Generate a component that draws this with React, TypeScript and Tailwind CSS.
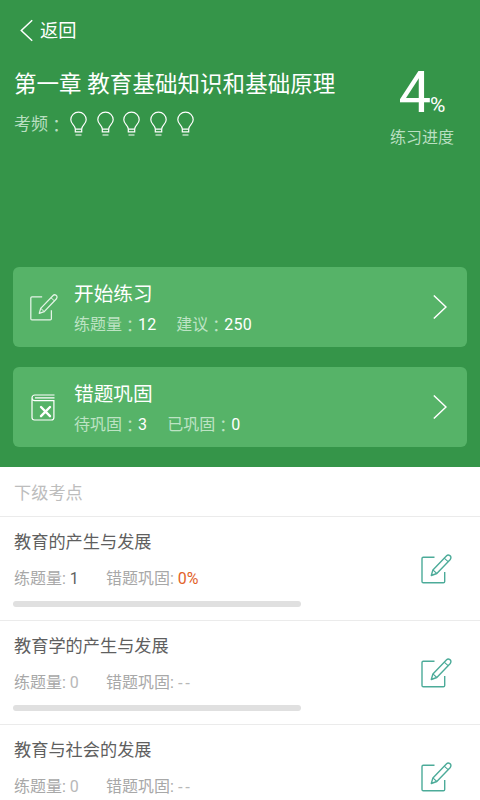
import type { ReactNode } from 'react';

type Topic = {
  title: string;
  count: string;
  accuracy: string;
  started: boolean;
};

const topics: Topic[] = [
  { title: '教育的产生与发展', count: '1', accuracy: '0%', started: true },
  { title: '教育学的产生与发展', count: '0', accuracy: '--', started: false },
  { title: '教育与社会的发展', count: '0', accuracy: '--', started: false },
];

export default function App() {
  return (
    <div className="h-[800px] w-[480px] overflow-hidden bg-white font-[Roboto,'Noto_Sans_CJK_SC',sans-serif]">
      <header className="h-[467px] bg-[#359549] px-[13px] text-white">
        <div className="flex h-[60px] items-center pl-[7px]">
          <svg className="h-[23px] w-[13px]" viewBox="0 0 13 23" fill="none" stroke="currentColor" strokeWidth="1.5">
            <path d="M12.2 1.2 1.3 11.5l10.9 10.3" />
          </svg>
          <span className="ml-[7px] pt-0.5 text-[18.2px] leading-6">返回</span>
        </div>

        <div className="flex h-[207px] justify-between">
          <div className="pt-2">
            <h1 className="whitespace-nowrap pl-px text-[22.5px] leading-8 tracking-[0.05px]">第一章 教育基础知识和基础原理</h1>
            <div className="mt-[9px] flex items-center">
              <span className="w-[57px] whitespace-nowrap pl-px text-[17px] leading-7 text-[#b9dfc1]">
                考频<Colon />
              </span>
              <div className="flex gap-[9.7px]">
                {[0, 1, 2, 3, 4].map((index) => (
                  <BulbIcon key={index} />
                ))}
              </div>
            </div>
          </div>
          <div className="flex w-[90px] flex-col items-center pt-0.5">
            <div className="flex h-[64px] items-baseline leading-[60px]">
              <span className="text-[58px] tracking-[-1px]">4</span>
              <span className="text-[21px]">%</span>
            </div>
            <span className="text-[16px] leading-6 text-[#b9dfc1]">练习进度</span>
          </div>
        </div>

        <div className="space-y-5">
          <ActionCard
            icon={<EditIcon className="ml-4 h-[29px] w-[29px] text-[#e3f4e6]" />}
            title="开始练习"
            stats={[['练题量', '12'], ['建议', '250']]}
          />
          <ActionCard
            icon={<BookIcon />}
            title="错题巩固"
            stats={[['待巩固', '3'], ['已巩固', '0']]}
          />
        </div>
      </header>

      <h2 className="h-[50px] border-b border-[#ebebeb] pl-3.5 text-[17.2px] leading-[52px] text-[#bdbdbd]">下级考点</h2>
      {topics.map((topic) => (
        <TopicRow key={topic.title} topic={topic} />
      ))}
    </div>
  );
}

function Colon() {
  return <span className="relative top-0.5 font-['Noto_Sans_CJK_TC']" lang="zh-TW">：</span>;
}

function ActionCard({ icon, title, stats }: { icon: ReactNode; title: string; stats: [string, string][] }) {
  return (
    <div className="flex h-20 items-center rounded-md bg-[#56b368] pr-5">
      <div className="w-[61px]">{icon}</div>
      <div className="flex-1 pt-[3px]">
        <p className="text-[19.7px] leading-7">{title}</p>
        <div className="mt-0.5 flex gap-[20px] text-[16px] leading-6">
          {stats.map(([label, value]) => (
            <span key={label} className="text-[#bde3c4]">
              {label}
              <Colon />
              <span className="tracking-[0.15px] text-white">{value}</span>
            </span>
          ))}
        </div>
      </div>
      <svg className="h-6 w-3.5" viewBox="0 0 14 24" fill="none" stroke="currentColor" strokeWidth="1.5">
        <path d="M.8.5 13 12 .8 23.5" />
      </svg>
    </div>
  );
}

function TopicRow({ topic }: { topic: Topic }) {
  return (
    <div className="flex h-[104px] justify-between border-b border-[#ebebeb] pl-[13px] pr-7">
      <div className="pt-[13px]">
        <p className="pl-px text-[17.2px] leading-6 text-[#5f5f5f]">{topic.title}</p>
        <div className="mt-[13px] flex h-6 pl-px text-[16px] leading-6 text-[#a8a8a8]">
          <span className="w-[92px]">
            练题量: <span className={topic.started ? 'text-[#5f5f5f]' : 'text-[#b8b8b8]'}>{topic.count}</span>
          </span>
          <span>
            错题巩固:{' '}
            <span className={topic.started ? 'text-[#e2622a]' : "font-['Noto_Sans'] leading-none tracking-[2px] text-[#b8b8b8]"}>
              {topic.accuracy}
            </span>
          </span>
        </div>
        <div className="mt-2.5 h-1.5 w-[288px] rounded-full bg-[#e0e0e0]" />
      </div>
      <EditIcon className="mt-9 h-8 w-8 text-[#4cab99]" />
    </div>
  );
}

function BulbIcon() {
  return (
    <svg className="h-[26px] w-[17px]" viewBox="0 0 17 26" fill="none" stroke="currentColor" strokeWidth="1.2">
      <path d="M5.3 20.8V18C5.3 14.5.8 13.200.8 8.800a7.700 7.700 0 0 1 15.400 0c0 4.400-4.500 5.700-4.500 9.200v2.800z" />
      <path d="M5.300 18.200h6.400M5.500 24h6" />
    </svg>
  );
}

function EditIcon({ className }: { className: string }) {
  return (
    <svg className={className} viewBox="0 0 32 32" fill="none" stroke="currentColor" strokeWidth="1.4" strokeLinejoin="round">
      <path d="M14.500 4.200H3.300Q2 4.200 2 5.500v22.900Q2 29.700 3.300 29.700h20.100q1.300 0 1.300-1.300V19" />
      <path d="m11.300 22.500 1.600-5.600L26.600 2.700q1.500-1.500 3.300-.1t.4 3.800L16.800 20.500z" />
      <path d="m12.900 16.900 3.900 3.600M24.200 5.200l3.900 3.500" strokeWidth="1.100" />
    </svg>
  );
}

function BookIcon() {
  return (
    <svg className="ml-[18px] h-[27px] w-6" viewBox="0 0 24 27" fill="none" stroke="currentColor" strokeWidth="1.2">
      <path d="M23.500 1H3.800a2.800 2.800 0 0 0 0 5.600h19.100v16.900q0 2.500-2.500 2.500H3.500Q1 26 1 23.500V3.800M23.500 3.800H4" />
      <path d="m10 13 9 9.200m0-9.200-9 9.200" strokeWidth="2.400" strokeLinecap="round" />
    </svg>
  );
}
